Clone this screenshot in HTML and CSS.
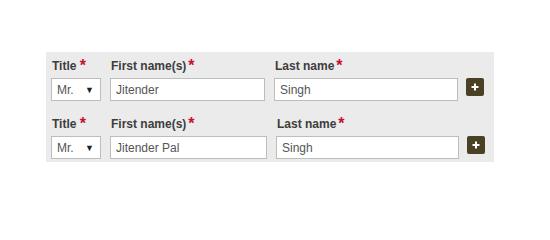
FILE: index.html
```html
<!DOCTYPE html>
<html>
<head>
<meta charset="utf-8">
<link rel="stylesheet" href="styles.css">
</head>
<body>
<div class="panel">
  <div class="row">
    <div class="field f-title">
      <label class="lbl">Title <span class="req tight">*</span></label>
      <div class="select"><span>Mr.</span><span class="arrow">▼</span></div>
    </div>
    <div class="field f-first">
      <label class="lbl">First name(s)<span class="req">*</span></label>
      <div class="input">Jitender</div>
    </div>
    <div class="field f-last">
      <label class="lbl">Last name<span class="req">*</span></label>
      <div class="input">Singh</div>
    </div>
    <div class="field f-btn">
      <div class="lbl"></div>
      <div class="btn"><svg width="8" height="8" viewBox="0 0 8 8"><path d="M4 0.5V7.5M0.5 4H7.5" stroke="#fff" stroke-width="2"/></svg></div>
    </div>
  </div>
  <div class="row row2">
    <div class="field f-title">
      <label class="lbl">Title <span class="req tight">*</span></label>
      <div class="select"><span>Mr.</span><span class="arrow">▼</span></div>
    </div>
    <div class="field f-first wide">
      <label class="lbl">First name(s)<span class="req">*</span></label>
      <div class="input">Jitender Pal</div>
    </div>
    <div class="field f-last">
      <label class="lbl">Last name<span class="req">*</span></label>
      <div class="input">Singh</div>
    </div>
    <div class="field f-btn">
      <div class="lbl"></div>
      <div class="btn"><svg width="8" height="8" viewBox="0 0 8 8"><path d="M4 0.5V7.5M0.5 4H7.5" stroke="#fff" stroke-width="2"/></svg></div>
    </div>
  </div>
</div>
</body>
</html>
```

FILE: styles.css
```css
html, body {
  margin: 0;
  padding: 0;
  background: #fff;
}
body {
  font-family: "Liberation Sans", Arial, sans-serif;
}
.panel {
  margin: 52px 0 0 46px;
  width: 443px;
  padding: 6px 0 3px 5px;
  background: #ebebeb;
}
.row {
  display: flex;
  gap: 9px;
}
.row2 {
  margin-top: 15px;
}
.field {
  display: flex;
  flex-direction: column;
}
.lbl {
  display: block;
  height: 14px;
  line-height: 14px;
  margin-bottom: 6px;
  padding-left: 1px;
  font-size: 12px;
  font-weight: bold;
  color: #3d3d3d;
  white-space: nowrap;
}
.req {
  color: #c8102e;
  font-size: 16px;
  font-weight: bold;
  margin-left: 2px;
  position: relative;
  top: 1px;
}
.req.tight {
  margin-left: 0;
}
.f-title { width: 50px; }
.f-first { width: 155px; }
.f-first.wide { width: 157px; }
.f-last { width: 184px; }
.row2 .f-last { width: 183px; }
.f-btn { width: 18px; margin-left: -1px; }
.select, .input {
  box-sizing: border-box;
  height: 23px;
  border: 1px solid #bdbdbd;
  background: #fff;
  font-size: 12px;
  color: #555;
  display: flex;
  align-items: center;
  padding-left: 5px;
}
.select {
  justify-content: space-between;
  padding-right: 6px;
}
.arrow {
  font-size: 9px;
  color: #222;
}
.btn {
  width: 18px;
  height: 18px;
  background: #4a4023;
  border-radius: 2px;
  display: flex;
  align-items: center;
  justify-content: center;
}
```
